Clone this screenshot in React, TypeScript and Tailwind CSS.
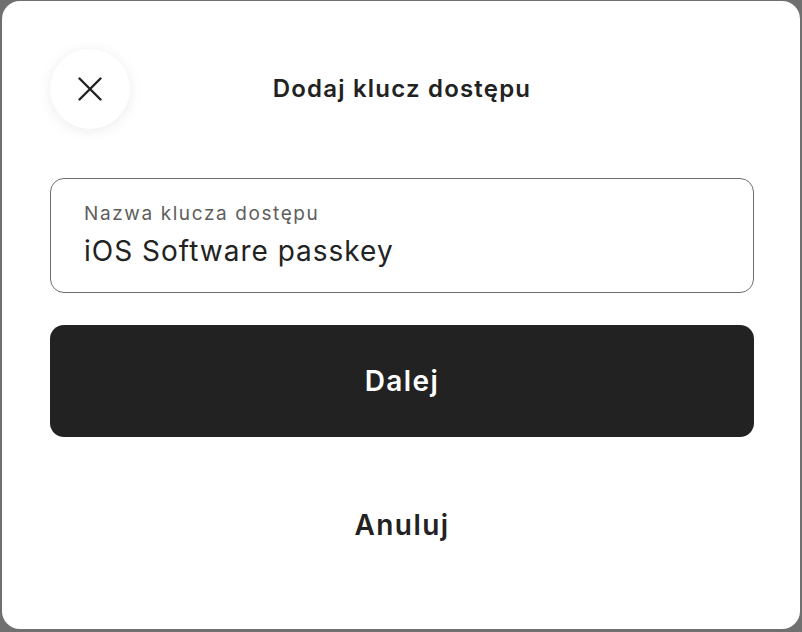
import {X} from "lucide-react";

const App = () => {
    return (
        <div className="w-[802px] h-[632px] bg-[#707070] pt-[1px] pl-[2px] pr-[2px] pb-[3px]"
             style={{fontFamily: "Inter, 'Noto Sans', sans-serif"}}>
            <div className="w-full h-full bg-white rounded-[18px] pl-[48px] pr-[46px] pt-[48px]">
                <div className="flex items-center h-[80px]">
                    <button
                        className="w-[80px] h-[80px] rounded-full bg-white shadow-[0_2px_14px_rgba(0,0,0,0.08)] flex items-center justify-center text-[#222]">
                        <X size={42} strokeWidth={1.4}/>
                    </button>
                    <h1 className="flex-1 text-center text-[24px] font-semibold text-[#222] tracking-[1.2px] mr-[80px]">
                        Dodaj klucz dostępu
                    </h1>
                </div>

                <div className="mt-[49px] h-[115px] border-[1.5px] border-[#6e6e6e] rounded-[14px] px-[33px] pt-[22px]">
                    <div className="text-[19px] leading-[26px] text-[#5e5e5e] tracking-[1.6px]">Nazwa klucza dostępu</div>
                    <div className="text-[28px] leading-[38px] text-[#222] mt-[5px] tracking-[1px]">iOS Software passkey</div>
                </div>

                <button
                    className="mt-[32px] w-full h-[112px] bg-[#222222] rounded-[14px] text-white text-[28px] font-semibold tracking-[1.4px]">
                    Dalej
                </button>

                <button className="mt-[32px] w-full h-[112px] text-[#222] text-[28px] font-semibold tracking-[1.4px]">
                    Anuluj
                </button>
            </div>
        </div>
    );
};

export default App;
